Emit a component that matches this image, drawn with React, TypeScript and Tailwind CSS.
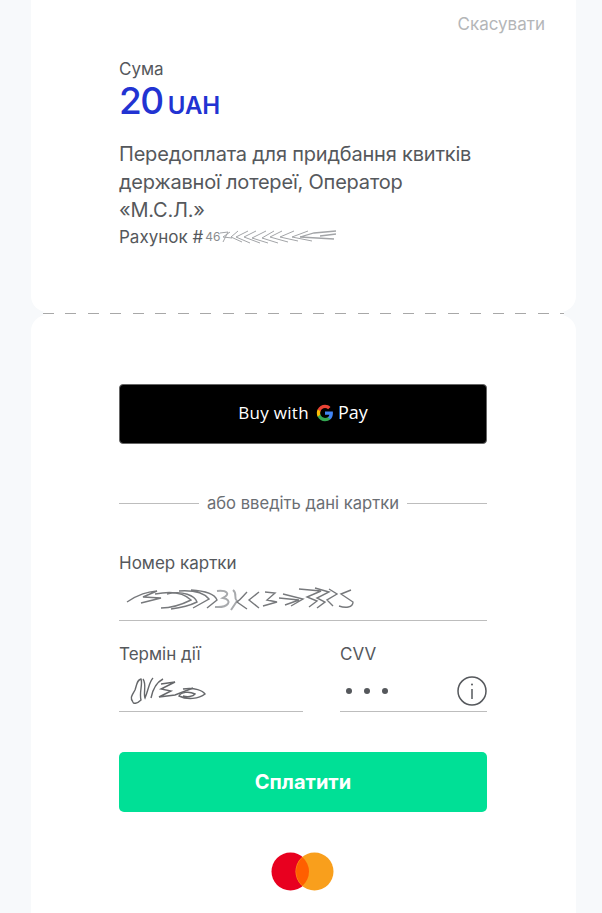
const bodyFont = "font-['Inter','Noto_Sans',sans-serif]";

function GoogleG() {
  return (
    <svg width="18" height="18" viewBox="0 0 48 48" className="shrink-0">
      <path fill="#4285F4" d="M45.1 24.5c0-1.6-.1-3.1-.4-4.5H24v8.5h11.8c-.5 2.8-2.1 5.1-4.4 6.7v5.5h7.1c4.2-3.8 6.6-9.5 6.6-16.2z" />
      <path fill="#34A853" d="M24 46c5.9 0 10.9-2 14.5-5.3l-7.1-5.5c-2 1.3-4.5 2.1-7.4 2.1-5.7 0-10.5-3.8-12.2-9H4.5v5.7C8.1 41.1 15.5 46 24 46z" />
      <path fill="#FBBC05" d="M11.8 28.3c-.4-1.3-.7-2.8-.7-4.3s.3-3 .7-4.3V14H4.5C3 17 2.2 20.4 2.2 24s.8 7 2.3 10l7.3-5.7z" />
      <path fill="#EA4335" d="M24 10.7c3.2 0 6.1 1.1 8.4 3.3l6.3-6.3C34.9 4.1 29.9 2 24 2 15.5 2 8.1 6.9 4.5 14l7.3 5.7c1.7-5.2 6.5-9 12.2-9z" />
    </svg>
  );
}

function Field({ label, children, className }: { label: string; children: React.ReactNode; className?: string }) {
  return (
    <div className={className}>
      <div className="text-[17px] leading-[22px] text-[#55585c]">{label}</div>
      <div className="mt-[6px] h-[41px] border-b border-[#bdbdbd] flex items-center">{children}</div>
    </div>
  );
}

export default function App() {
  return (
    <div className={`${bodyFont} h-[913px] overflow-hidden bg-[#f7f9fb] pl-[31px] pr-[26px] flex flex-col`}>
      {/* Order summary */}
      <div className="h-[312px] shrink-0 bg-white rounded-b-[16px] pt-[13px] pr-[31px] pl-[88px]">
        <div className="text-right text-[17px] leading-[22px] text-[#b4b6b8]">Скасувати</div>
        <div className="mt-[23px] text-[17px] leading-[22px] text-[#55585c]">Сума</div>
        <div className="flex items-baseline gap-[5px] text-[#2233d2]">
          <span className="text-[37px] leading-[42px] font-medium tracking-[-1.5px]">20</span>
          <span className="text-[24px] leading-[30px] font-semibold">UAH</span>
        </div>
        <div className="mt-[18px] w-[368px] text-[20px] leading-[28px] tracking-[-0.2px] text-[#55585c]">
          Передоплата для придбання квитків державної лотереї, Оператор «М.С.Л.»
        </div>
        <div className="flex items-center text-[17px] leading-[26px] text-[#55585c]">
          <span>Рахунок #</span>
          <span className="ml-[2px] text-[12px] text-[#8a8c8e]">46</span>
          <svg width="118" height="18" viewBox="0 0 118 18" fill="none" stroke="#a3a5a8" strokeWidth="1">
            <path d="M0 5 L8 4 L3 14 M10 4 L3 9 L12 10 M18 3 L11 9 L22 14 M28 3 L16 9 L30 15" />
            <path d="M36 3 L24 9 L40 15 M46 3 L32 10 L48 15 M54 3 L42 10 L58 15 M62 3 L50 9 L68 14" />
            <path d="M74 3 L60 9 L78 13 M88 3 L72 9 L92 13" />
            <path d="M116 3 L94 5 L80 9 L114 11 M116 6 L100 8" strokeWidth="1.3" />
          </svg>
        </div>
      </div>

      {/* Tear line */}
      <div className="h-[3px] shrink-0 mx-[12px] bg-white flex items-center">
        <div className="h-px w-full bg-[repeating-linear-gradient(90deg,#a8a8a8_0,#a8a8a8_11px,#ffffff_11px,#ffffff_22.5px)]" />
      </div>

      {/* Payment form */}
      <div className="flex-1 bg-white rounded-t-[16px] pt-[69px] pl-[88px] pr-[89px]">
        <div className="h-[60px] bg-black border border-[#666666] rounded-[4px] pb-[3px] flex items-center justify-center gap-[7px] text-white">
          <span className="text-[17px] font-medium tracking-[0.3px] font-['Open_Sans',sans-serif]">Buy with</span>
          <span className="flex items-center gap-[4px]">
            <GoogleG />
            <span className="text-[18px] font-['Open_Sans',sans-serif]">Pay</span>
          </span>
        </div>

        <div className="mt-[48px] h-[22px] flex items-center gap-[8px] text-[16.6px] text-[#6a6e73]">
          <div className="flex-1 h-px bg-[#bdbdbd]" />
          <span>або введіть дані картки</span>
          <div className="flex-1 h-px bg-[#bdbdbd]" />
        </div>

        <Field label="Номер картки" className="mt-[38px]">
          <svg width="232" height="28" viewBox="0 0 232 28" fill="none" stroke="#77797c" strokeWidth="1.4" className="ml-[6px]">
            <path d="M2 16 C14 8 22 6 32 5 L18 11 L36 12 L16 17 M30 8 C50 4 60 8 66 14 C54 20 44 22 36 22" />
            <path d="M42 8 C58 4 70 10 72 16 C62 21 54 22 46 23 M54 5 C70 4 80 8 84 13 L68 22 M66 4 C84 5 90 9 92 14 L82 22" />
            <path d="M92 5 C102 4 106 8 98 12 C108 14 104 22 90 21 M108 4 C113 8 108 12 112 15 L106 24" stroke="#a8aaad" strokeWidth="2" />
            <path d="M122 6 C118 10 116 13 112 16 L122 23 M134 6 L124 14 L134 22 M140 6 L150 7 L142 14 L152 16 L138 20" />
            <path d="M154 12 L174 14 L160 19 M158 8 L178 13 L166 20 M174 3 L196 5 L182 11 L192 15 L184 21" />
            <path d="M190 2 L204 6 L192 12 L200 16 L192 22 M204 3 L212 8 L202 14 L208 20 M226 4 L216 8 L228 16 C228 22 220 22 214 20" />
          </svg>
        </Field>

        <div className="mt-[22px] flex justify-between">
          <Field label="Термін дії" className="w-[184px]">
            <svg width="82" height="30" viewBox="0 0 82 30" fill="none" stroke="#66686b" strokeWidth="1.4" className="ml-[8px]">
              <path d="M6 26 C2 22 6 18 8 14 C10 8 10 4 14 3 C16 8 12 16 14 24 C10 28 6 28 6 26 M16 3 C20 8 16 18 18 22 C22 12 22 6 26 2 M24 22 C26 12 30 6 36 3" />
              <path d="M34 8 L48 6 L34 13 L44 15 L32 21 L48 19 L66 12" />
              <path d="M56 13 C68 11 76 15 78 18 C72 23 60 24 52 20 C54 16 62 15 68 18 C66 21 60 21 56 20" />
            </svg>
          </Field>
          <Field label="CVV" className="w-[147px]">
            <div className="flex-1 flex items-center gap-[12px] pl-[6px]">
              <span className="w-[6px] h-[6px] rounded-full bg-[#55585c]" />
              <span className="w-[6px] h-[6px] rounded-full bg-[#55585c]" />
              <span className="w-[6px] h-[6px] rounded-full bg-[#55585c]" />
            </div>
            <svg width="30" height="30" viewBox="0 0 30 30" fill="none" stroke="#55585c" strokeWidth="1.5">
              <circle cx="15" cy="15" r="14" />
              <path d="M15 13 V23" />
              <circle cx="15" cy="8.5" r="1" fill="#55585c" stroke="none" />
            </svg>
          </Field>
        </div>

        <button className="mt-[40px] w-full h-[60px] rounded-[5px] bg-[#00e096] text-white text-[20px] font-bold">Сплатити</button>

        <div className="mt-[40px] flex justify-center">
          <svg width="63" height="39" viewBox="0 0 63 39" className="mr-[2px]">
            <circle cx="19.5" cy="19.5" r="19" fill="#e8001f" />
            <circle cx="43.5" cy="19.5" r="19" fill="#f99f1c" />
            <path d="M31.5 5.2 A19 19 0 0 1 31.5 33.8 A19 19 0 0 1 31.5 5.2 Z" fill="#ff5f00" />
          </svg>
        </div>
      </div>
    </div>
  );
}
